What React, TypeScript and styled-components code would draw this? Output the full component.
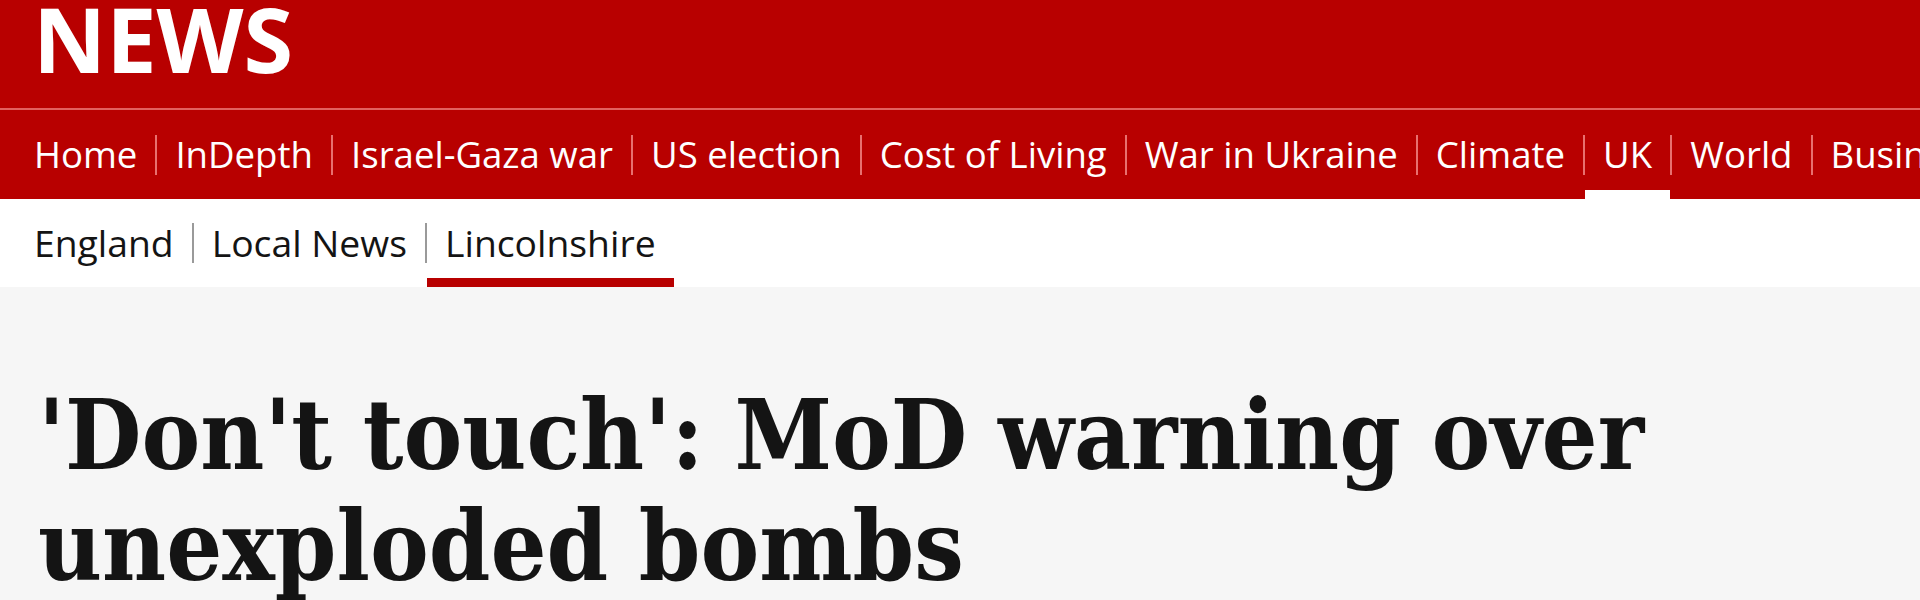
import React from "react";
import styled, { createGlobalStyle } from "styled-components";

const GlobalStyle = createGlobalStyle`
  html, body {
    margin: 0;
    padding: 0;
    background: #f6f6f6;
  }
  #root {
    min-height: 600px;
  }
`;

const Page = styled.div`
  width: 1920px;
  height: 600px;
  overflow: hidden;
  background: #f6f6f6;
  font-family: "Open Sans", "Liberation Sans", Arial, sans-serif;
`;

const Masthead = styled.header`
  height: 108px;
  background: #b80000;
  border-bottom: 2px solid #e2605f;
  padding-left: 33px;
`;

const Logo = styled.div`
  font-size: 90px;
  line-height: 76px;
  font-weight: 700;
  color: #ffffff;
`;

const NavBar = styled.nav<{ light?: boolean }>`
  display: flex;
  align-items: center;
  height: ${(p) => (p.light ? "88px" : "89px")};
  padding-left: 16px;
  background: ${(p) => (p.light ? "#ffffff" : "#b80000")};
  white-space: nowrap;
  overflow: hidden;
`;

const NavItem = styled.a<{ light?: boolean; active?: boolean }>`
  align-self: stretch;
  display: flex;
  align-items: center;
  padding: 0 18px;
  font-size: ${(p) => (p.light ? "37.3px" : "36.6px")};
  line-height: 1;
  color: ${(p) => (p.light ? "#141414" : "#ffffff")};
  text-decoration: none;
  box-shadow: ${(p) =>
    p.active ? `inset 0 -9px 0 ${p.light ? "#b80000" : "#ffffff"}` : "none"};
`;

const Divider = styled.span<{ light?: boolean }>`
  flex: none;
  width: 2px;
  height: 40px;
  background: ${(p) => (p.light ? "#9a9a9a" : "#e8706f")};
`;

const Main = styled.main`
  padding: 92px 38px 0;
`;

const Headline = styled.h1`
  margin: 0;
  max-width: 1700px;
  font-family: "DejaVu Serif Condensed", "DejaVu Serif", "Liberation Serif", serif;
  font-stretch: condensed;
  font-size: 98px;
  line-height: 111px;
  font-weight: 700;
  color: #141414;
`;

const primaryLinks = [
  "Home",
  "InDepth",
  "Israel-Gaza war",
  "US election",
  "Cost of Living",
  "War in Ukraine",
  "Climate",
  "UK",
  "World",
  "Business",
  "Politics",
  "Culture",
];

const secondaryLinks = ["England", "Local News", "Lincolnshire"];

const Nav: React.FC<{ links: string[]; active: string; light?: boolean }> = ({
  links,
  active,
  light,
}) => (
  <NavBar light={light}>
    {links.map((link, i) => (
      <React.Fragment key={link}>
        {i > 0 && <Divider light={light} />}
        <NavItem href="#" light={light} active={link === active}>
          {link}
        </NavItem>
      </React.Fragment>
    ))}
  </NavBar>
);

export default function App() {
  return (
    <Page>
      <GlobalStyle />
      <Masthead>
        <Logo>NEWS</Logo>
      </Masthead>
      <Nav links={primaryLinks} active="UK" />
      <Nav links={secondaryLinks} active="Lincolnshire" light />
      <Main>
        <Headline>'Don't touch': MoD warning over unexploded bombs</Headline>
      </Main>
    </Page>
  );
}
